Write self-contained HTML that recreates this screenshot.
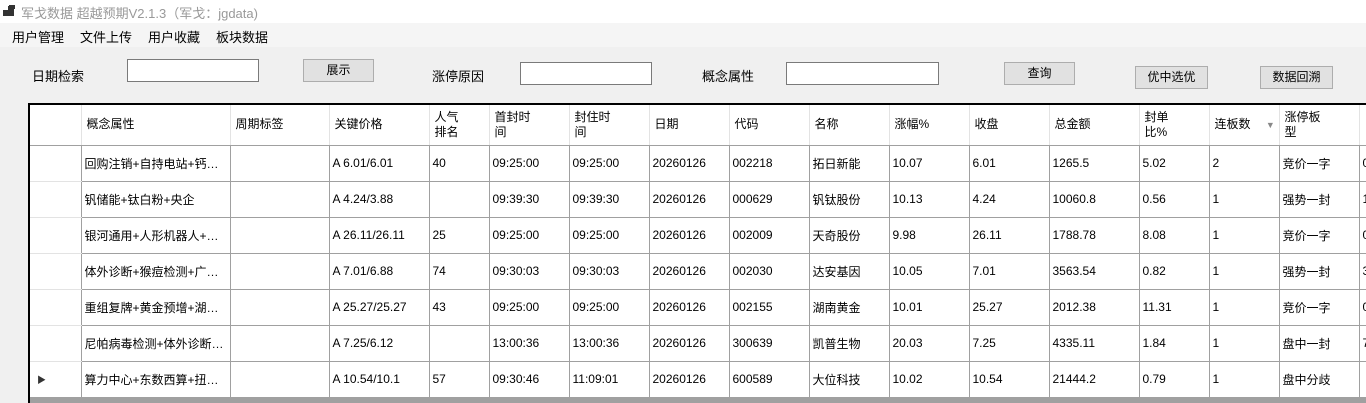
<!DOCTYPE html>
<html><head><meta charset="utf-8"><style>
*{margin:0;padding:0;box-sizing:border-box}
body{width:1366px;height:403px;overflow:hidden;background:#f0f0f0;font-family:"Liberation Sans","Microsoft YaHei","Noto Sans CJK SC",sans-serif;font-size:12px;color:#000;position:relative}
.a{position:absolute;white-space:nowrap}
.title{left:0;top:0;width:1366px;height:23px;background:#fff}
.menu{left:0;top:23px;width:1366px;height:24px;background:#f5f5f5}
.inp{position:absolute;background:#fff;border:1px solid #7a7a7a;height:23px}
.btn{position:absolute;background:#e1e1e1;border:1px solid #adadad;height:23px;text-align:center;line-height:21px}
.grid{position:absolute;left:28px;top:103px;width:1338px;height:300px;background:#fff;border-left:2px solid #000;border-top:2px solid #000;overflow:hidden}
table{border-collapse:collapse;table-layout:fixed;position:absolute;left:0;top:0;width:1371px}
td{height:36px;border-right:1px solid #a0a0a0;border-bottom:1px solid #a0a0a0;padding:0 0 0 3px;white-space:nowrap;overflow:hidden;font-size:12px}
tr.h td{height:40px;border-right:1px solid #e3e3e3;border-bottom:1px solid #a0a0a0;line-height:15px;padding-left:5px}
td.rh{border-right:1px solid #a0a0a0;border-bottom:1px solid #e3e3e3}
tr.h td.rh{border-bottom:1px solid #a0a0a0}
.bar{position:absolute;left:0;top:292px;width:1338px;height:8px;background:#a0a0a0}
</style></head><body>
<div class="a title"></div>
<svg class="a" style="left:3px;top:5px" width="12" height="12"><rect x="0" y="5" width="5" height="6" fill="#333"/><rect x="5" y="1" width="6" height="10" fill="#333"/><rect x="6" y="0" width="6" height="4" fill="#333"/></svg>
<div class="a" style="left:21px;top:3px;font-size:13px;color:#999">军戈数据 超越预期V2.1.3（军戈：jgdata)</div>
<div class="a menu"></div>
<div class="a" style="left:12px;top:27px;font-size:13px">用户管理</div>
<div class="a" style="left:80px;top:27px;font-size:13px">文件上传</div>
<div class="a" style="left:148px;top:27px;font-size:13px">用户收藏</div>
<div class="a" style="left:216px;top:27px;font-size:13px">板块数据</div>
<div class="a" style="left:32px;top:66px;font-size:13px">日期检索</div>
<div class="inp" style="left:127px;top:59px;width:132px"></div>
<div class="btn" style="left:303px;top:59px;width:71px">展示</div>
<div class="a" style="left:432px;top:66px;font-size:13px">涨停原因</div>
<div class="inp" style="left:520px;top:62px;width:132px"></div>
<div class="a" style="left:702px;top:66px;font-size:13px">概念属性</div>
<div class="inp" style="left:786px;top:62px;width:153px"></div>
<div class="btn" style="left:1004px;top:62px;width:71px">查询</div>
<div class="btn" style="left:1135px;top:66px;width:73px">优中选优</div>
<div class="btn" style="left:1260px;top:66px;width:73px">数据回溯</div>
<div class="grid">
<table>
<colgroup><col style="width:51px"><col style="width:149px"><col style="width:99px"><col style="width:100px"><col style="width:60px"><col style="width:80px"><col style="width:80px"><col style="width:80px"><col style="width:80px"><col style="width:80px"><col style="width:80px"><col style="width:80px"><col style="width:90px"><col style="width:70px"><col style="width:70px"><col style="width:80px"><col style="width:42px"></colgroup>
<tr class="h"><td class="rh"></td><td>概念属性</td><td>周期标签</td><td>关键价格</td><td>人气<br>排名</td><td>首封时<br>间</td><td>封住时<br>间</td><td>日期</td><td>代码</td><td>名称</td><td>涨幅%</td><td>收盘</td><td>总金额</td><td>封单<br>比%</td><td>连板数 <span style="color:#888;font-size:9px;margin-left:12px">▼</span></td><td>涨停板<br>型</td><td></td></tr>
<tr><td class="rh"></td><td>回购注销+自持电站+钙…</td><td></td><td>A 6.01/6.01</td><td>40</td><td>09:25:00</td><td>09:25:00</td><td>20260126</td><td>002218</td><td>拓日新能</td><td>10.07</td><td>6.01</td><td>1265.5</td><td>5.02</td><td>2</td><td>竞价一字</td><td>0</td></tr>
<tr><td class="rh"></td><td>钒储能+钛白粉+央企</td><td></td><td>A 4.24/3.88</td><td></td><td>09:39:30</td><td>09:39:30</td><td>20260126</td><td>000629</td><td>钒钛股份</td><td>10.13</td><td>4.24</td><td>10060.8</td><td>0.56</td><td>1</td><td>强势一封</td><td>1</td></tr>
<tr><td class="rh"></td><td>银河通用+人形机器人+…</td><td></td><td>A 26.11/26.11</td><td>25</td><td>09:25:00</td><td>09:25:00</td><td>20260126</td><td>002009</td><td>天奇股份</td><td>9.98</td><td>26.11</td><td>1788.78</td><td>8.08</td><td>1</td><td>竞价一字</td><td>0</td></tr>
<tr><td class="rh"></td><td>体外诊断+猴痘检测+广…</td><td></td><td>A 7.01/6.88</td><td>74</td><td>09:30:03</td><td>09:30:03</td><td>20260126</td><td>002030</td><td>达安基因</td><td>10.05</td><td>7.01</td><td>3563.54</td><td>0.82</td><td>1</td><td>强势一封</td><td>3</td></tr>
<tr><td class="rh"></td><td>重组复牌+黄金预增+湖…</td><td></td><td>A 25.27/25.27</td><td>43</td><td>09:25:00</td><td>09:25:00</td><td>20260126</td><td>002155</td><td>湖南黄金</td><td>10.01</td><td>25.27</td><td>2012.38</td><td>11.31</td><td>1</td><td>竞价一字</td><td>0</td></tr>
<tr><td class="rh"></td><td>尼帕病毒检测+体外诊断…</td><td></td><td>A 7.25/6.12</td><td></td><td>13:00:36</td><td>13:00:36</td><td>20260126</td><td>300639</td><td>凯普生物</td><td>20.03</td><td>7.25</td><td>4335.11</td><td>1.84</td><td>1</td><td>盘中一封</td><td>7</td></tr>
<tr><td class="rh" style="padding-left:7px;font-size:9px;color:#333">▶</td><td>算力中心+东数西算+扭…</td><td></td><td>A 10.54/10.1</td><td>57</td><td>09:30:46</td><td>11:09:01</td><td>20260126</td><td>600589</td><td>大位科技</td><td>10.02</td><td>10.54</td><td>21444.2</td><td>0.79</td><td>1</td><td>盘中分歧</td><td></td></tr>
</table>
<div class="bar"></div>
</div>
</body></html>
